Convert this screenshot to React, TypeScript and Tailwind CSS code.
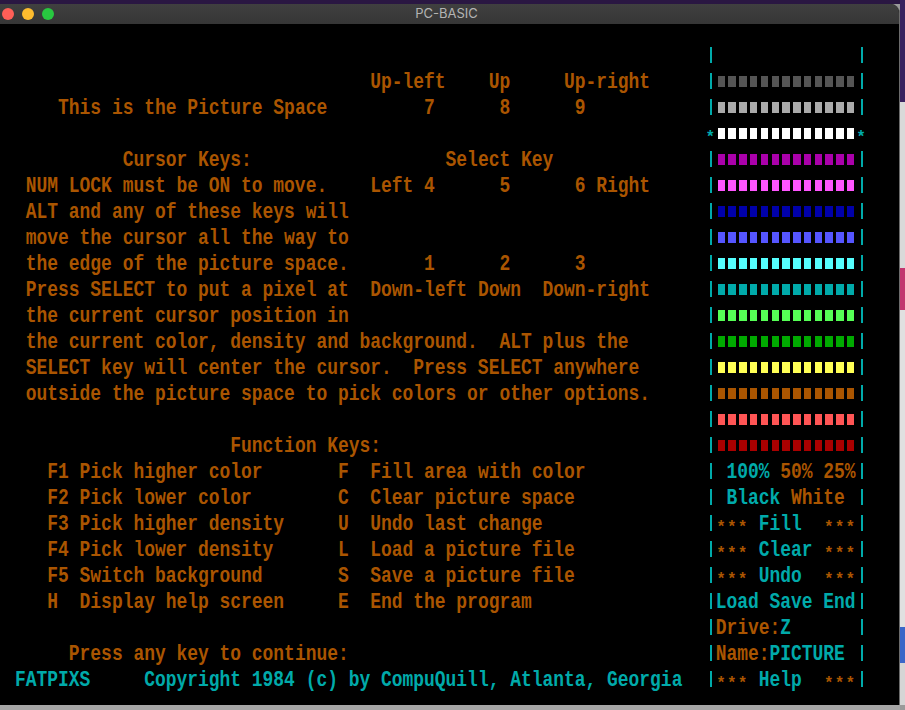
import React from "react";

type C = "o" | "c";
type Item = [number, string, C?];
type Seg = [string, C];

type Panel =
  | { kind: "blocks"; color: string; star?: boolean }
  | { kind: "empty" }
  | { kind: "text"; segs: Seg[] };

const ORANGE = "text-[#aa5500]";
const CYAN = "text-[#00aaaa]";

const rows: { left: Item[]; panel: Panel }[] = [
  { left: [], panel: { kind: "empty" } },
  { left: [[33, "Up-left"], [44, "Up"], [51, "Up-right"]], panel: { kind: "blocks", color: "bg-[#555555]" } },
  { left: [[4, "This is the Picture Space"], [38, "7"], [45, "8"], [52, "9"]], panel: { kind: "blocks", color: "bg-[#aaaaaa]" } },
  { left: [], panel: { kind: "blocks", color: "bg-[#ffffff]", star: true } },
  { left: [[10, "Cursor Keys:"], [40, "Select Key"]], panel: { kind: "blocks", color: "bg-[#aa00aa]" } },
  { left: [[1, "NUM LOCK must be ON to move."], [33, "Left 4"], [45, "5"], [52, "6 Right"]], panel: { kind: "blocks", color: "bg-[#ff55ff]" } },
  { left: [[1, "ALT and any of these keys will"]], panel: { kind: "blocks", color: "bg-[#0000aa]" } },
  { left: [[1, "move the cursor all the way to"]], panel: { kind: "blocks", color: "bg-[#5555ff]" } },
  { left: [[1, "the edge of the picture space."], [38, "1"], [45, "2"], [52, "3"]], panel: { kind: "blocks", color: "bg-[#55ffff]" } },
  { left: [[1, "Press SELECT to put a pixel at"], [33, "Down-left Down  Down-right"]], panel: { kind: "blocks", color: "bg-[#00aaaa]" } },
  { left: [[1, "the current cursor position in"]], panel: { kind: "blocks", color: "bg-[#55ff55]" } },
  { left: [[1, "the current color, density and background.  ALT plus the"]], panel: { kind: "blocks", color: "bg-[#00aa00]" } },
  { left: [[1, "SELECT key will center the cursor.  Press SELECT anywhere"]], panel: { kind: "blocks", color: "bg-[#ffff55]" } },
  { left: [[1, "outside the picture space to pick colors or other options."]], panel: { kind: "blocks", color: "bg-[#aa5500]" } },
  { left: [], panel: { kind: "blocks", color: "bg-[#ff5555]" } },
  { left: [[20, "Function Keys:"]], panel: { kind: "blocks", color: "bg-[#aa0000]" } },
  {
    left: [[3, "F1 Pick higher color"], [30, "F  Fill area with color"]],
    panel: { kind: "text", segs: [[" 100%", "c"], [" 50% 25%", "o"]] },
  },
  {
    left: [[3, "F2 Pick lower color"], [30, "C  Clear picture space"]],
    panel: { kind: "text", segs: [[" Black", "c"], [" White ", "o"]] },
  },
  {
    left: [[3, "F3 Pick higher density"], [30, "U  Undo last change"]],
    panel: { kind: "text", segs: [["***", "o"], [" Fill  ", "c"], ["***", "o"]] },
  },
  {
    left: [[3, "F4 Pick lower density"], [30, "L  Load a picture file"]],
    panel: { kind: "text", segs: [["***", "o"], [" Clear ", "c"], ["***", "o"]] },
  },
  {
    left: [[3, "F5 Switch background"], [30, "S  Save a picture file"]],
    panel: { kind: "text", segs: [["***", "o"], [" Undo  ", "c"], ["***", "o"]] },
  },
  {
    left: [[3, "H  Display help screen"], [30, "E  End the program"]],
    panel: { kind: "text", segs: [["Load Save End", "c"]] },
  },
  { left: [], panel: { kind: "text", segs: [["Drive:", "o"], ["Z", "c"]] } },
  { left: [[5, "Press any key to continue:"]], panel: { kind: "text", segs: [["Name:", "o"], ["PICTURE", "c"]] } },
  {
    left: [[0, "FATPIXS", "c"], [12, "Copyright 1984 (c) by CompuQuill, Atlanta, Georgia", "c"]],
    panel: { kind: "text", segs: [["***", "o"], [" Help  ", "c"], ["***", "o"]] },
  },
];

function Line({ items }: { items: Item[] }) {
  const out: React.ReactNode[] = [];
  let col = 0;
  items.forEach(([at, text, c], i) => {
    if (at > col) out.push(<span key={"s" + i}>{" ".repeat(at - col)}</span>);
    out.push(
      <span key={i} className={c === "c" ? CYAN : ORANGE}>
        {text}
      </span>
    );
    col = at + text.length;
  });
  return <>{out}</>;
}

// the font's asterisk sits high; one cell each, dropped to the middle like the DOS glyph
function StarCell({ color }: { color: string }) {
  return (
    <div className={`h-[26px] w-[10.78px] flex-none translate-y-[3.6px] text-center text-[16px] leading-[26px] ${color}`}>
      *
    </div>
  );
}

function Bar() {
  return (
    <div className="h-[26px] w-[10.78px] flex-none">
      <div className="ml-[5px] mt-[4px] h-[16px] w-[2px] bg-[#00aaaa]" />
    </div>
  );
}

function PanelCells({ panel }: { panel: Panel }) {
  if (panel.kind === "blocks") {
    return (
      <>
        {panel.star ? <StarCell color={CYAN} /> : <Bar />}
        {Array.from({ length: 13 }).map((_, i) => (
          <div key={i} className="h-[26px] w-[10.78px] flex-none">
            <div className={`ml-[2px] mt-[7px] h-[11px] w-[7.5px] ${panel.color}`} />
          </div>
        ))}
        {panel.star ? <StarCell color={CYAN} /> : <Bar />}
      </>
    );
  }
  return (
    <>
      <Bar />
      <div className="flex h-[26px] w-[140.14px] flex-none items-center">
        {panel.kind === "text" &&
          panel.segs.map(([t, c], i) => {
            const cls = c === "c" ? CYAN : ORANGE;
            if (/^\*+$/.test(t))
              return (
                <React.Fragment key={i}>
                  {t.split("").map((_, j) => (
                    <StarCell key={j} color={cls} />
                  ))}
                </React.Fragment>
              );
            return (
              <div key={i} className={`h-[20px] flex-none scale-y-[1.28] whitespace-pre leading-[20px] ${cls}`}>
                {t}
              </div>
            );
          })}
      </div>
      <Bar />
    </>
  );
}

export default function App() {
  return (
    <div className="flex h-[710px] w-[905px] overflow-hidden bg-[#9a9a9a]">
      <div className="-ml-[6px] flex w-[906px] flex-none flex-col">
        <div className="h-[4px] bg-[#2a1742]" />
        <div className="flex h-[701px] flex-col overflow-hidden rounded-tr-[9px] border-r border-[#6b6b6b] bg-black">
          <div className="relative flex h-[21px] flex-none items-center border-b border-black bg-gradient-to-b from-[#404040] to-[#363636]">
            <div className="flex gap-[8px] pl-[8px]">
              <div className="h-[12px] w-[12px] rounded-full bg-[#ff5f57]" />
              <div className="h-[12px] w-[12px] rounded-full bg-[#febc2e]" />
              <div className="h-[12px] w-[12px] rounded-full bg-[#28c840]" />
            </div>
            <div className="absolute inset-0 flex items-center justify-center font-['Inter','Noto_Sans',sans-serif] text-[13px] text-[#b4b4b4]">
              PC-BASIC
            </div>
          </div>
          <div className="flex flex-1 flex-col pl-[21px] pt-[18px] font-['Liberation_Mono',monospace] text-[17.96px] font-bold">
            {rows.map((r, i) => (
              <div key={i} className="flex h-[26px] items-center">
                <div className={`h-[20px] w-[689.92px] flex-none scale-y-[1.28] whitespace-pre leading-[20px] ${ORANGE}`}>
                  <Line items={r.left} />
                </div>
                <PanelCells panel={r.panel} />
              </div>
            ))}
          </div>
        </div>
        <div className="flex-1 bg-[#a6a6a6]" />
      </div>
      <div className="flex w-[5px] flex-none flex-col">
        <div className="h-[102px] bg-[#3a2260]" />
        <div className="h-[166px] bg-[#d9d9d9]" />
        <div className="h-[42px] bg-[#c2356e]" />
        <div className="h-[317px] bg-[#e0e0e0]" />
        <div className="h-[36px] bg-[#3a66c8]" />
        <div className="h-[42px] bg-[#d5d5d5]" />
        <div className="flex-1 bg-[#9a9a9a]" />
      </div>
    </div>
  );
}
